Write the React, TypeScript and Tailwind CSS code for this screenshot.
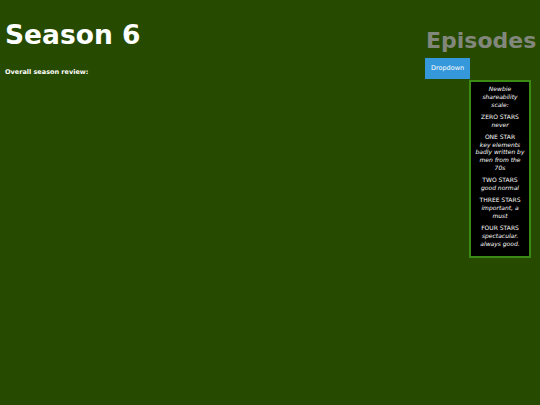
import React from 'react';

const scale = [
  { title: 'ZERO STARS', lines: ['never'] },
  { title: 'ONE STAR', lines: ['key elements', 'badly written by', 'men from the', '70s'] },
  { title: 'TWO STARS', lines: ['good normal'] },
  { title: 'THREE STARS', lines: ['important, a', 'must'] },
  { title: 'FOUR STARS', lines: ['spectacular.', 'always good.'] },
];

const App: React.FC = () => {
  return (
    <div className="flex h-[405px] w-[540px] overflow-hidden bg-[#264a00] font-['DejaVu_Sans',sans-serif] text-white">
      <div className="flex-1 pl-[5px]">
        <h1 className="mt-[20px] text-[26.5px] font-bold leading-[30px]">Season 6</h1>
        <p className="mt-[18px] text-[6.5px] font-bold leading-[8px]">Overall season review:</p>
      </div>
      <div className="w-[115px]">
        <h2 className="mt-[28px] pl-[1px] text-[22px] font-bold leading-[26px] text-[#82877c]">Episodes</h2>
        <div className="relative mt-[4px] w-[45px]">
          <button className="flex h-[21px] w-[45px] items-center justify-center bg-[#3498db] text-[6.5px] leading-none text-white">
            Dropdown
          </button>
          <div className="absolute left-[44px] top-[22px] w-[62px] border-2 border-[#3a8a14] bg-black px-[1px] pt-[3px] pb-[4px] text-center text-[6px] leading-[7.75px]">
            <p className="mb-[4.6px] italic">
              Newbie
              <br />
              shareability
              <br />
              scale:
            </p>
            {scale.map(s => (
              <p key={s.title} className="mb-[4.6px]">
                {s.title}
                {s.lines.map(l => (
                  <span key={l} className="block whitespace-nowrap italic">
                    {l}
                  </span>
                ))}
              </p>
            ))}
          </div>
        </div>
      </div>
    </div>
  );
};

export default App;
